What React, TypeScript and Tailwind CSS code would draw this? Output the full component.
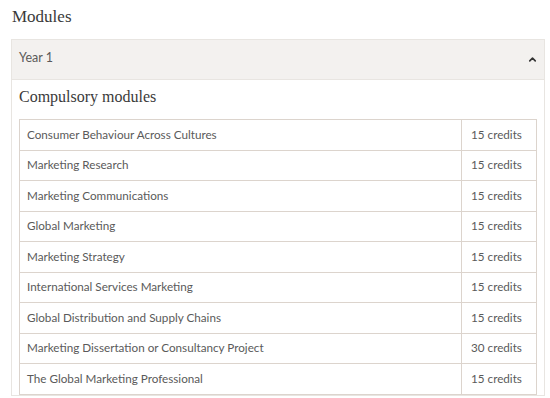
import { ChevronUp } from "lucide-react";

const modules = [
  { name: "Consumer Behaviour Across Cultures", credits: 15 },
  { name: "Marketing Research", credits: 15 },
  { name: "Marketing Communications", credits: 15 },
  { name: "Global Marketing", credits: 15 },
  { name: "Marketing Strategy", credits: 15 },
  { name: "International Services Marketing", credits: 15 },
  { name: "Global Distribution and Supply Chains", credits: 15 },
  { name: "Marketing Dissertation or Consultancy Project", credits: 30 },
  { name: "The Global Marketing Professional", credits: 15 },
];

export default function App() {
  return (
    <div className="bg-white w-[550px] h-[398px] overflow-hidden pl-[11px] pr-[5px]">
      <h2 className="font-['Liberation_Serif',serif] text-[17px] leading-none text-[#3a3a3a] pt-[8px] pl-px h-[39px]">
        Modules
      </h2>

      <div className="border border-[#e8e5e1]">
        <div className="h-[40px] bg-[#f3f1ef] border-b border-[#e8e5e1] flex items-center justify-between pl-[7px] pr-[6px] pb-[3px]">
          <span className="font-['Lato',sans-serif] text-[12.5px] text-[#5a5a5a]">Year 1</span>
          <ChevronUp size={11} strokeWidth={3.5} className="text-[#333] mt-[3px]" />
        </div>

        <div className="pl-[7px] pr-[7px] pt-[9px]">
          <h3 className="font-['Liberation_Serif',serif] text-[16px] leading-none text-[#3a3a3a] h-[30px]">
            Compulsory modules
          </h3>
          <table className="w-full border-collapse font-['Lato',sans-serif] text-[11.7px] text-[#5a5a5a]">
            <tbody>
              {modules.map((m) => (
                <tr key={m.name} className="h-[30.5px]">
                  <td className="border border-[#dcd4cd] pl-[7px] align-middle">{m.name}</td>
                  <td className="border border-[#dcd4cd] pl-[9px] w-[75px] align-middle">{m.credits} credits</td>
                </tr>
              ))}
            </tbody>
          </table>
        </div>
      </div>
    </div>
  );
}
